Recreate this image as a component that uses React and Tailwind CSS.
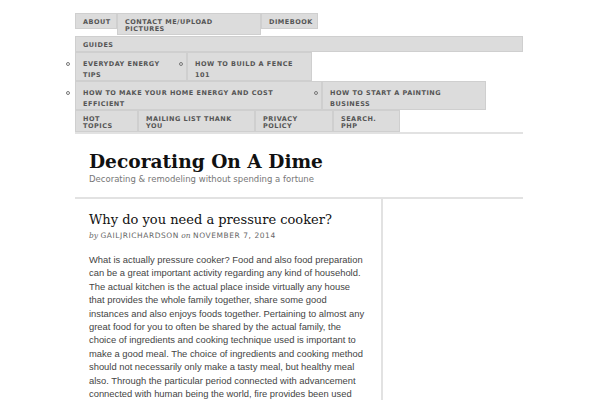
import React from "react";

const navFont = { fontFamily: '"DejaVu Sans", sans-serif' };

function Box({ w, h, lh, children, className = "" }) {
  return (
    <div
      className={`relative shrink-0 bg-[#dcdcdc] border border-[#cfcfcf] pl-[7px] pt-[5px] text-[6.5px] font-bold uppercase tracking-[0.5px] text-[#555] ${className}`}
      style={{ width: w, height: h, lineHeight: lh, ...navFont }}
    >
      {children}
    </div>
  );
}

function Bullet({ className }) {
  return (
    <span
      className={`absolute w-[4px] h-[4px] rounded-full border border-[#777] ${className}`}
    />
  );
}

const lines = [
  "What is actually pressure cooker? Food and also food preparation",
  "can be a great important activity regarding any kind of household.",
  "The actual kitchen is the actual place inside virtually any house",
  "that provides the whole family together, share some good",
  "instances and also enjoys foods together. Pertaining to almost any",
  "great food for you to often be shared by the actual family, the",
  "choice of ingredients and cooking technique used is important to",
  "make a good meal. The choice of ingredients and cooking method",
  "should not necessarily only make a tasty meal, but healthy meal",
  "also. Through the particular period connected with advancement",
  "connected with human being the world, fire provides been used",
  "for cooking.",
];

export default function App() {
  return (
    <div className="w-[600px] h-[400px] overflow-hidden bg-white">
      <div className="ml-[75px] w-[448px] pt-[13px]">
        {/* row 1 */}
        <div className="flex items-start h-[23px]">
          <Box w={42} h={16} lh="7px" className="pt-[4px]">About</Box>
          <Box w={144} h={22} lh="7px" className="pt-[4px]">Contact me/upload<br />pictures</Box>
          <Box w={57} h={16} lh="7px" className="pt-[4px]">Dimebook</Box>
        </div>
        {/* row 2 */}
        <div className="flex">
          <Box w={448} h={16} lh="7px" className="pt-[4px]">Guides</Box>
        </div>
        {/* row 3 */}
        <div className="flex relative">
          <Bullet className="left-[-9px] top-[10px]" />
          <Box w={112} h={29} lh="11px" className="pt-[6px]">Everyday energy<br />tips</Box>
          <Box w={125} h={29} lh="11px" className="pt-[6px]">
            <Bullet className="left-[-9px] top-[9px]" />
            How to build a fence<br />101
          </Box>
        </div>
        {/* row 4 */}
        <div className="flex relative">
          <Bullet className="left-[-9px] top-[10px]" />
          <Box w={247} h={29} lh="11px" className="pt-[6px]">How to make your home energy and cost<br />efficient</Box>
          <Box w={164} h={29} lh="11px" className="pt-[6px]">
            <Bullet className="left-[-9px] top-[9px]" />
            How to start a painting<br />business
          </Box>
        </div>
        {/* row 5 */}
        <div className="flex">
          <Box w={63} h={22} lh="7px" className="pt-[4px]">Hot<br />topics</Box>
          <Box w={117} h={22} lh="7px" className="pt-[4px]">Mailing list thank<br />you</Box>
          <Box w={78} h={22} lh="7px" className="pt-[4px]">Privacy<br />policy</Box>
          <Box w={67} h={22} lh="7px" className="pt-[4px]">Search.<br />php</Box>
        </div>
        <div className="h-[2px] bg-[#e2e2e2]" />

        {/* header */}
        <div className="pl-[14px] pt-[16px] pb-[13px]">
          <h1
            className="text-[18.6px] leading-[24px] font-bold text-[#111]"
            style={{ fontFamily: '"DejaVu Serif", serif' }}
          >
            Decorating On A Dime
          </h1>
          <p
            className="text-[8.5px] leading-[10px] text-[#777]"
            style={{ fontFamily: '"DejaVu Sans", sans-serif' }}
          >
            Decorating &amp; remodeling without spending a fortune
          </p>
        </div>
        <div className="h-[2px] bg-[#e2e2e2]" />

        {/* content */}
        <div className="flex">
          <div className="w-[308px] border-r-2 border-[#e2e2e2] pl-[14px] pr-[6px] pt-[12px]">
            <h2
              className="text-[13px] leading-[18px] text-[#111]"
              style={{ fontFamily: '"DejaVu Serif", serif' }}
            >
              Why do you need a pressure cooker?
            </h2>
            <div className="text-[7.5px] leading-[10px] text-[#666] mt-[2px]" style={{ fontFamily: '"DejaVu Sans", sans-serif' }}>
              <span className="italic" style={{ fontFamily: '"DejaVu Serif", serif' }}>by</span>{" "}
              <span className="uppercase tracking-[0.55px]">gailjrichardson</span>{" "}
              <span className="italic" style={{ fontFamily: '"DejaVu Serif", serif' }}>on</span>{" "}
              <span className="uppercase tracking-[0.55px]">November 7, 2014</span>
            </div>
            <p
              className="mt-[12px] text-[9.4px] leading-[13.4px] text-[#444] whitespace-nowrap"
              style={{ fontFamily: '"Liberation Sans", Arial, sans-serif' }}
            >
              {lines.map((l, i) => (
                <React.Fragment key={i}>
                  {l}
                  {i < lines.length - 1 && <br />}
                </React.Fragment>
              ))}
            </p>
          </div>
          <div className="flex-1" />
        </div>
      </div>
    </div>
  );
}
